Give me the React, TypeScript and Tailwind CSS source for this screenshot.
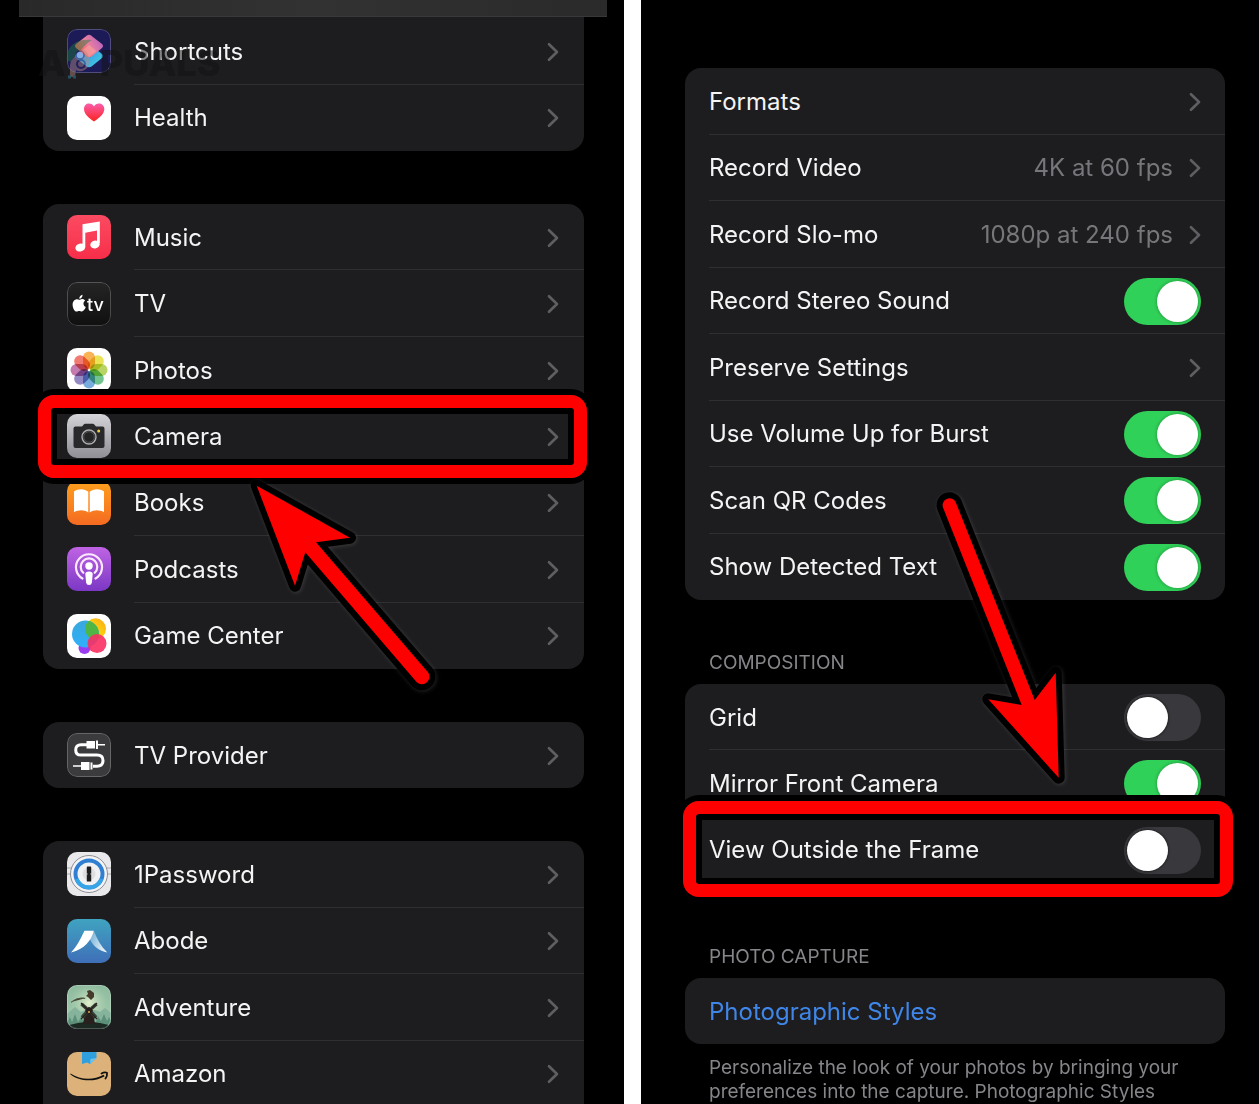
/**
 * Settings walkthrough — two phone screens side by side.
 *
 * Left: the app list with the Camera row called out.
 * Right: the Camera page with the "View Outside the Frame" switch called out.
 */

import { useState } from 'react'
import type { ReactNode } from 'react'

interface AppEntry {
  name: string
  icon: ReactNode
  marked?: boolean
}

export default function App() {
  return (
    <main className="grid h-screen grid-cols-[624fr_618fr] gap-[17px] overflow-hidden bg-white font-['Inter','Liberation_Sans',sans-serif] text-[#f4f4f5]">
      <SettingsScreen />
      <CameraScreen />
    </main>
  )
}

function SettingsScreen() {
  return (
    <section className="relative overflow-hidden bg-black">
      {/* Blurred title bar */}
      <header className="ml-[19px] mr-[17px] h-[17px] border-b border-[#38383a] bg-linear-to-r from-[#29292a] via-[#323233] to-[#2a2a2b]" />

      <div className="ml-[43px] mr-[40px] flex flex-col gap-[53px]">
        <AppGroup apps={systemApps} className="h-[134px] rounded-b-2xl pt-px" />
        <AppGroup apps={mediaApps} className="h-[465px] rounded-2xl" />
        <AppGroup apps={providerApps} className="h-[66px] rounded-2xl" />
        <AppGroup apps={otherApps} className="h-[266px] rounded-t-2xl" />
      </div>

      <Watermark />
      <Arrow
        className="left-0 top-0"
        d="M256.7 485.7 350 537.7 316 542.3 428.2 672.5A7.6 7.6 0 0 1 417 682.5L305.3 552.3 295 585.7Z"
      />
    </section>
  )
}

function AppGroup({ apps, className }: { apps: AppEntry[]; className: string }) {
  return (
    <ul className={`flex flex-col bg-[#1d1d1f] ${className}`}>
      {apps.map((app) => (
        <li key={app.name} className="group relative flex flex-1">
          <a href="#" className="flex flex-1 items-center gap-[23px] pl-6">
            {app.icon}
            <span className="flex flex-1 items-center justify-between self-stretch border-b border-[#2f2f32] pr-[25px] pt-0.5 text-[24px] leading-8 group-last:border-transparent">
              {app.name}
              <Chevron />
            </span>
          </a>
          {app.marked && <Highlight className="-inset-y-2 -left-[5px] -right-[3px]" />}
        </li>
      ))}
    </ul>
  )
}

function CameraScreen() {
  return (
    <section className="relative overflow-hidden bg-black pl-[44px] pr-[34px] pt-[68px]">
      <div className="flex h-[532px] flex-col rounded-2xl bg-[#1d1d1f]">
        <LinkRow label="Formats" />
        <LinkRow label="Record Video" value="4K at 60 fps" />
        <LinkRow label="Record Slo-mo" value="1080p at 240 fps" />
        <SwitchRow id="stereo" label="Record Stereo Sound" on />
        <LinkRow label="Preserve Settings" />
        <SwitchRow id="burst" label="Use Volume Up for Burst" on />
        <SwitchRow id="qr" label="Scan QR Codes" on />
        <SwitchRow id="text" label="Show Detected Text" on />
      </div>

      <h2 className="mt-[51px] px-6 text-[19px] leading-6 text-[#85858a]">COMPOSITION</h2>
      <div className="mt-[9px] flex h-[199px] flex-col rounded-2xl bg-[#1d1d1f]">
        <SwitchRow id="grid" label="Grid" />
        <SwitchRow id="mirror" label="Mirror Front Camera" on />
        <SwitchRow id="outside" label="View Outside the Frame" marked />
      </div>

      <h2 className="mt-[62px] px-6 text-[19px] leading-6 text-[#85858a]">PHOTO CAPTURE</h2>
      <div className="mt-[9px] flex h-[66px] items-center rounded-2xl bg-[#1d1d1f] px-6 pt-0.5">
        <a href="#" className="text-[24px] leading-8 text-[#3f86e8]">
          Photographic Styles
        </a>
      </div>
      <p className="mt-3 px-6 text-[19px] leading-6 text-[#85858a]">
        Personalize the look of your photos by bringing your
        preferences into the capture. Photographic Styles
      </p>

      <Arrow
        className="-left-[641px] top-0"
        d="M943 507.5A6.8 6.8 0 0 1 956 503L1034.7 700 1055.7 672.7 1058.7 777.7 988.3 699.3 1021.7 705Z"
      />
    </section>
  )
}

const rowClass =
  'flex flex-1 items-center justify-between border-b border-[#2f2f32] pr-6 pt-0.5 text-[24px] leading-8 group-last:border-transparent'

function LinkRow({ label, value }: { label: string; value?: string }) {
  return (
    <div className="group flex flex-1 pl-6">
      <a href="#" className={rowClass}>
        {label}
        <span className="flex items-center gap-4 text-[#77777b]">
          {value}
          <Chevron />
        </span>
      </a>
    </div>
  )
}

interface SwitchRowProps {
  id: string
  label: string
  on?: boolean
  marked?: boolean
}

function SwitchRow({ id, label, on = false, marked = false }: SwitchRowProps) {
  const [checked, setChecked] = useState(on)

  return (
    <div className="group relative flex flex-1 pl-6">
      <div className={rowClass}>
        <label htmlFor={id}>{label}</label>
        <input
          id={id}
          type="checkbox"
          role="switch"
          checked={checked}
          onChange={(e) => setChecked(e.target.checked)}
          className="h-[47px] w-[77px] appearance-none rounded-full bg-[#39393d] p-[3px] before:block before:size-[41px] before:rounded-full before:bg-white before:shadow-[0_0_2px_1px_#00000066] checked:bg-[#30d158] checked:before:translate-x-[30px] checked:before:shadow-[0_0_3px_1px_#00000033]"
        />
      </div>
      {marked && <Highlight className="-bottom-[14px] -left-0.5 -right-2 -top-4" />}
    </div>
  )
}

function Chevron() {
  return (
    <svg width="12" height="20" viewBox="0 0 12 20" fill="none" stroke="#5f5f63" strokeWidth="2.6" strokeLinecap="round" strokeLinejoin="round">
      <path d="M2 2.2 10 10l-8 7.8" />
    </svg>
  )
}

/* Red call-out frame with a black edge on both sides */
function Highlight({ className }: { className: string }) {
  return (
    <div
      className={`pointer-events-none absolute z-10 rounded-2xl border-[13px] border-[#ff0000] shadow-[0_0_0_6px_#000,inset_0_0_0_6px_#000] ${className}`}
    />
  )
}

function Arrow({ d, className }: { d: string; className: string }) {
  return (
    <svg
      width="1259"
      height="1104"
      viewBox="0 0 1259 1104"
      className={`pointer-events-none absolute z-20 max-w-none drop-shadow-[1px_1px_2px_#ffffff22] ${className}`}
    >
      <path d={d} fill="#000" stroke="#000" strokeWidth="12" strokeLinejoin="round" />
      <path d={d} fill="#ff0000" />
    </svg>
  )
}

function Watermark() {
  return (
    <div className="pointer-events-none absolute left-[38px] top-[43px] flex items-center text-[36px] leading-10 font-extrabold text-[#121213]/50">
      <span>A</span>
      <svg width="34" height="44" viewBox="0 0 34 44" className="-mt-3" opacity="0.45">
        <path d="M1 26C-1 12 10 3 26 5c-9 5-14 14-18 22Z" fill="#1d7a3c" />
        <path d="M5 26c4-4 8-10 12-12 6 3 8 12 5 18-4 5-9 5-12 3l-1 7H4V30Z" fill="#b48a86" />
        <circle cx="14" cy="20" r="4" fill="#dcd3ea" stroke="#29265c" strokeWidth="1.5" />
        <circle cx="15" cy="29" r="4" fill="none" stroke="#29265c" strokeWidth="2" />
        <path d="M2 42h3m2 0h3" stroke="#3291b5" strokeWidth="3" />
      </svg>
      <span>PUALS</span>
    </div>
  )
}

/* ---------- App icons ---------- */

function Tile({ className, children }: { className: string; children: ReactNode }) {
  return (
    <svg width="44" height="44" viewBox="0 0 44 44" className={`shrink-0 rounded-[10px] ${className}`}>
      {children}
    </svg>
  )
}

const edge = <rect x="0.5" y="0.5" width="43" height="43" rx="9.5" fill="none" stroke="#fff" strokeOpacity="0.22" />

const petals = [
  '#f7a02b',
  '#e6dc2c',
  '#a5c93d',
  '#4fb573',
  '#5597d3',
  '#7a6bb5',
  '#b55a9a',
  '#ee5a4c',
]

const systemApps: AppEntry[] = [
  {
    name: 'Shortcuts',
    icon: (
      <Tile className="bg-[#1d1b57]">
        <defs>
          <linearGradient id="sc-top" x1="0" y1="0.7" x2="1" y2="0.2">
            <stop offset="0" stopColor="#ff5a4d" />
            <stop offset="0.5" stopColor="#ea7fa0" />
            <stop offset="1" stopColor="#b45fc0" />
          </linearGradient>
          <linearGradient id="sc-bottom" x1="0" y1="0" x2="1" y2="0.8">
            <stop offset="0" stopColor="#3b6bd8" />
            <stop offset="1" stopColor="#3fd0e6" />
          </linearGradient>
        </defs>
        <path d="M20 16.500q2-1.500 4 0l11 8.500q2 2 0 4l-10.500 8.500q-2.500 1.500-5 0L9 29q-2-2 0-4Z" fill="url(#sc-bottom)" />
        <path d="M20 6.500q2-1.500 4 0l11 8.500q2 2 0 4l-10.500 8.500q-2.500 1.500-5 0L9 19q-2-2 0-4Z" fill="url(#sc-top)" />
        <path d="m22 16 7.500 6-7.500 6-7.500-6Z" fill="#f6a59c" opacity="0.6" />
        {edge}
      </Tile>
    ),
  },
  {
    name: 'Health',
    icon: (
      <Tile className="bg-white">
        <defs>
          <linearGradient id="heart" x1="0" y1="0" x2="0" y2="1">
            <stop offset="0" stopColor="#fb5cab" />
            <stop offset="1" stopColor="#fb2320" />
          </linearGradient>
        </defs>
        <path d="M27 25.500c-6-4-10-8-10-12.500 0-3.500 2.300-5.500 5-5.500 2.300 0 4 1.200 5 3 1-1.800 2.700-3 5-3 2.700 0 5.300 2 5.300 5.500 0 4.500-4.300 8.500-10.300 12.500Z" fill="url(#heart)" />
      </Tile>
    ),
  },
]

const mediaApps: AppEntry[] = [
  {
    name: 'Music',
    icon: (
      <Tile className="bg-linear-to-b from-[#fb4a61] to-[#f72d4a]">
        <path d="M15.500 9.200 32.800 6.500V28H30V15.500l-11.700 2.300V32h-2.800Z" fill="#fff" />
        <ellipse cx="13.300" cy="32.500" rx="5" ry="4" transform="rotate(-15 13.300 32.500)" fill="#fff" />
        <ellipse cx="28" cy="29.500" rx="4.800" ry="3.900" transform="rotate(-15 28 29.500)" fill="#fff" />
      </Tile>
    ),
  },
  {
    name: 'TV',
    icon: (
      <Tile className="bg-linear-to-b from-[#252526] to-[#101011]">
        <path d="M13.300 17.500c1.500-1 3.600-.8 4.900 1-2.500 1.700-2.200 5.300.6 6.500-.9 2.300-2.400 4.500-4 4.500-1 0-1.500-.6-2.600-.6s-1.600.6-2.600.6c-2.200 0-4-3.900-4-6.800 0-4.300 3.500-6.600 6.700-4.900.4.200.7.100 1-.3Z" fill="#fff" />
        <path d="M12.300 16.800c-.2-1.900 1.300-3.700 3.200-4 .2 2-1.300 4-3.200 4Z" fill="#fff" />
        <text x="20" y="29" fontSize="18" fontWeight="500" fill="#fff">
          tv
        </text>
        {edge}
      </Tile>
    ),
  },
  {
    name: 'Photos',
    icon: (
      <Tile className="bg-white">
        {petals.map((color, i) => (
          <rect
            key={color}
            x="16"
            y="3.500"
            width="12"
            height="17.500"
            rx="6"
            fill={color}
            opacity="0.8"
            transform={`rotate(${i * 45} 22 22)`}
            className="mix-blend-multiply"
          />
        ))}
      </Tile>
    ),
  },
  {
    name: 'Camera',
    marked: true,
    icon: (
      <Tile className="bg-linear-to-b from-[#d4d4d8] to-[#8f8f95]">
        <path d="M8.500 12.500h6.500l2-2.300q.4-.5 1-.5h8q.6 0 1 .5l2 2.300h6.500q2 0 2 2v17.500q0 2-2 2h-27q-2 0-2-2V14.500q0-2 2-2Z" fill="#29292b" />
        <circle cx="22" cy="23" r="7" fill="none" stroke="#aeaeb2" strokeWidth="1.400" />
        <circle cx="22" cy="23" r="5.300" fill="#232324" stroke="#515155" />
        <circle cx="31.700" cy="17" r="1.500" fill="#ecd33f" />
      </Tile>
    ),
  },
  {
    name: 'Books',
    icon: (
      <Tile className="bg-linear-to-b from-[#fd9f1c] to-[#f46a21]">
        <path d="M7 10.500c4-3 10.500-3.200 14.300.3v20.700c-4-3-9.700-3-14.300-.3ZM37 10.500c-4-3-10.500-3.200-14.300.3v20.700c4-3 9.700-3 14.300-.3Z" fill="#fff" />
      </Tile>
    ),
  },
  {
    name: 'Podcasts',
    icon: (
      <Tile className="bg-linear-to-b from-[#c063e4] to-[#7c37c4]">
        <g fill="none" stroke="#fbeaff" strokeWidth="2.200" strokeLinecap="round">
          <path d="M15.500 31.500a13 13 0 1 1 13 0" />
          <path d="M16.300 25.800a8.300 8.300 0 1 1 11.400 0" />
        </g>
        <circle cx="22" cy="19" r="3.700" fill="#fff" />
        <path d="M18.300 27q0-2.500 3.700-2.500t3.700 2.500l-.8 8.500q-.4 2.500-2.900 2.500t-2.900-2.500Z" fill="#fff" />
      </Tile>
    ),
  },
  {
    name: 'Game Center',
    icon: (
      <Tile className="bg-white">
        <defs>
          <linearGradient id="gc-blue" x1="0" y1="0" x2="0" y2="1">
            <stop offset="0" stopColor="#39a8dd" />
            <stop offset="1" stopColor="#2fb0fb" />
          </linearGradient>
          <linearGradient id="gc-yellow" x1="0" y1="1" x2="1" y2="0">
            <stop offset="0" stopColor="#8dc63f" />
            <stop offset="0.500" stopColor="#fbd10f" />
            <stop offset="1" stopColor="#fba51b" />
          </linearGradient>
          <clipPath id="gc-overlap">
            <circle cx="28.500" cy="14.800" r="10.500" />
          </clipPath>
        </defs>
        <circle cx="17.500" cy="34" r="6" fill="#9a3df0" />
        <circle cx="28.500" cy="14.800" r="10.500" fill="url(#gc-yellow)" />
        <circle cx="18.500" cy="20" r="13.500" fill="url(#gc-blue)" />
        <circle cx="18.500" cy="20" r="13.500" fill="#4fb646" clipPath="url(#gc-overlap)" />
        <circle cx="30" cy="29.500" r="9.500" fill="#fb2f62" opacity="0.900" />
      </Tile>
    ),
  },
]

const providerApps: AppEntry[] = [
  {
    name: 'TV Provider',
    icon: (
      <Tile className="bg-[#3b3b3d]">
        <path d="M20 11.700h-6q-5.300 0-5.300 5.200t5.300 5.200h16q6 0 6 5.500t-6 5.600h-4" fill="none" stroke="#fff" strokeWidth="3" />
        <path d="M19.500 8h8.500v7.500h-8.500ZM29 7.500h2v8.500h-2ZM31 11H38v1.600h-7ZM14 29h8.500v8H14ZM23.500 29.500h2v7h-2ZM6 32.200h8v1.600H6Z" fill="#fff" />
        {edge}
      </Tile>
    ),
  },
]

const otherApps: AppEntry[] = [
  {
    name: '1Password',
    icon: (
      <Tile className="bg-[#e9e9eb]">
        <path d="M0 16h44M0 22h44" stroke="#a9a9ad" />
        <circle cx="22" cy="22" r="18.500" fill="#f4f4f6" stroke="#8e8e93" />
        <circle cx="22" cy="22" r="13.500" fill="#f1f1f3" stroke="#2f7fd2" strokeWidth="4" />
        <path d="M9.500 27A13.500 13.500 0 0 0 34.500 27" fill="none" stroke="#35a5e8" strokeWidth="4" />
        <circle cx="22" cy="22" r="6.500" fill="#dfdfe2" />
        <rect x="19.800" y="14.500" width="4.400" height="15" rx="0.600" fill="#1d1d1f" />
        <path d="M19.800 20.500q1.600 1.500 0 3M24.200 20.500q-1.600 1.500 0 3" fill="#dfdfe2" />
      </Tile>
    ),
  },
  {
    name: 'Abode',
    icon: (
      <Tile className="bg-linear-to-b from-[#3fa3c0] to-[#3f6fb8]">
        <defs>
          <linearGradient id="abode" x1="0" y1="0.300" x2="1" y2="0.800">
            <stop offset="0" stopColor="#7fb5da" />
            <stop offset="1" stopColor="#f2f8fc" />
          </linearGradient>
        </defs>
        <path d="M26.800 11.700c3.200 8.300 7.200 15.500 13.500 21.800C32 31.800 26.500 27.500 23 20.500Z" fill="url(#abode)" />
        <path d="M17.500 11.700h9.300c-2.600 10-9 18.300-22.800 21.800 5.500-6 9-12.500 13.500-21.800Z" fill="#fff" />
      </Tile>
    ),
  },
  {
    name: 'Adventure',
    icon: (
      <Tile className="bg-linear-to-b from-[#8dba9e] to-[#a9cdb0]">
        <defs>
          <radialGradient id="glow">
            <stop offset="0" stopColor="#e3f0cc" />
            <stop offset="1" stopColor="#a3cbab" stopOpacity="0" />
          </radialGradient>
        </defs>
        <circle cx="22" cy="18" r="20" fill="url(#glow)" />
        <path d="M0 29 8 22l6 5 4-2h10l5 2 5-4 6 5v17H0Z" fill="#86b39b" />
        <path d="m0 38 3-6 2 5 3-8 3 8 3-5 3 5h12l2-6 3 5 3-7 3 7 2-4 2 4v8H0Z" fill="#5d9079" />
        <path d="M0 41q22-8 44 0v3H0Z" fill="#1b2922" />
        <path d="M18.500 24q3.500-4 7 0l2.500 15H16Z" fill="#28201c" />
        <g stroke="#3a4438" strokeWidth="3.600">
          <path d="m14.500 19 5 4.500M29.500 19l-5 4.500M15 32.500l4.500-5M29 32.500l-4.500-5" />
        </g>
        <path d="m14 18 16 16M30 18 14 34" stroke="#28201c" strokeWidth="1.200" />
        <path d="M4 17c5-4 9-5 15-4M20 6l3-1 4 3v4l-3 3-3-3-2-1 2-2Z" fill="#463a2d" />
        <path d="M4 17.500c5-4 9-5 14-4" fill="none" stroke="#4d5b47" />
        <circle cx="22" cy="27" r="1" fill="#e0a850" />
        {edge}
      </Tile>
    ),
  },
  {
    name: 'Amazon',
    icon: (
      <Tile className="bg-[#dcb27a]">
        <path d="M15 0h14.500v6L23 12l-3-1.500-5 1.500Z" fill="#2f9fdd" />
        <path d="m23 12 .5-5 6-1Z" fill="#6cc3ee" />
        <path d="M3.500 21.500c10 6.500 23 7 33 1.200l1.200 1.500C27 30.500 12 29.500 3.300 22.300Z" fill="#111" />
        <path d="M34.500 21.500c2-1.200 4-1.400 5.500-.7.300 2-.3 4-1.500 5.700" fill="none" stroke="#111" strokeWidth="1.800" strokeLinecap="round" strokeLinejoin="round" />
      </Tile>
    ),
  },
]
